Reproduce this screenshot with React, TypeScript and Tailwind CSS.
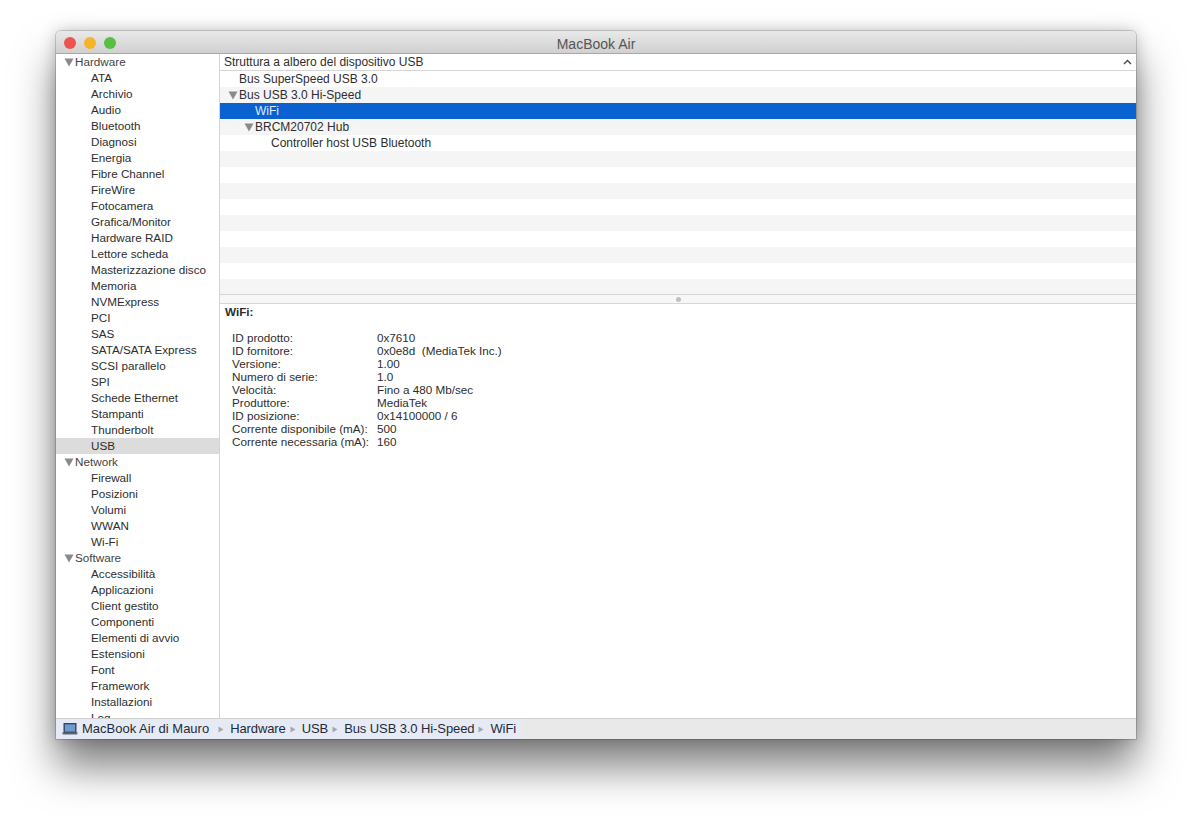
import React from "react";

const sections = [
  {
    title: "Hardware",
    items: ["ATA", "Archivio", "Audio", "Bluetooth", "Diagnosi", "Energia", "Fibre Channel", "FireWire", "Fotocamera", "Grafica/Monitor", "Hardware RAID", "Lettore scheda", "Masterizzazione disco", "Memoria", "NVMExpress", "PCI", "SAS", "SATA/SATA Express", "SCSI parallelo", "SPI", "Schede Ethernet", "Stampanti", "Thunderbolt", "USB"],
  },
  { title: "Network", items: ["Firewall", "Posizioni", "Volumi", "WWAN", "Wi-Fi"] },
  {
    title: "Software",
    items: ["Accessibilità", "Applicazioni", "Client gestito", "Componenti", "Elementi di avvio", "Estensioni", "Font", "Framework", "Installazioni", "Log"],
  },
];

const details = [
  ["ID prodotto:", "0x7610"],
  ["ID fornitore:", "0x0e8d  (MediaTek Inc.)"],
  ["Versione:", "1.00"],
  ["Numero di serie:", "1.0"],
  ["Velocità:", "Fino a 480 Mb/sec"],
  ["Produttore:", "MediaTek"],
  ["ID posizione:", "0x14100000 / 6"],
  ["Corrente disponibile (mA):", "500"],
  ["Corrente necessaria (mA):", "160"],
];

const crumbs = ["Hardware", "USB", "Bus USB 3.0 Hi-Speed", "WiFi"];

function Disclosure() {
  return (
    <svg width="10" height="9" viewBox="0 0 10 9" className="shrink-0">
      <path d="M0.5 0.5h9L5 8.5z" fill="#8a8a8a" />
    </svg>
  );
}

function Crumb() {
  return (
    <svg width="6" height="7" viewBox="0 0 6 7" className="shrink-0">
      <path d="M0.5 0.5L5.5 3.5L0.5 6.5z" fill="#a4a8b0" />
    </svg>
  );
}

function Laptop() {
  return (
    <svg width="16" height="12" viewBox="0 0 16 12" className="shrink-0">
      <rect x="2" y="0.5" width="12" height="9" fill="#3f5f86" stroke="#39424e" />
      <rect x="3" y="1.5" width="10" height="7" fill="#6d9bd0" />
      <path d="M0 9.5h16l-1 2H1z" fill="#5c6672" />
    </svg>
  );
}

function TreeRow({ label, indent, open, selected, striped }: { label?: string; indent: string; open?: boolean; selected?: boolean; striped?: boolean }) {
  return (
    <div className={`flex h-4 items-center ${indent} ${selected ? "bg-[#0a62d0] text-[#dfe9f8]" : striped ? "bg-[#f5f5f5]" : "bg-white"}`}>
      <div className="flex w-[11px] shrink-0 justify-start">{open && <Disclosure />}</div>
      {label && <span>{label}</span>}
    </div>
  );
}

export default function App() {
  return (
    <div className="h-[819px] w-[1192px] overflow-hidden bg-white pl-[56px] pt-[31px] font-['Liberation_Sans',Arial,sans-serif] text-[11.7px] leading-4 text-[#2e2e2e]">
      <div className="flex h-[708px] w-[1080px] flex-col overflow-hidden rounded-t-[5px] shadow-[0_0_0_1px_rgba(0,0,0,0.16),0_28px_42px_rgba(0,0,0,0.5),0_0_16px_rgba(0,0,0,0.22)]">
        {/* TITLE BAR */}
        <div className="relative flex h-[23px] shrink-0 items-center justify-center border-b border-[#a9a9a9] bg-gradient-to-b from-[#e9e9e9] to-[#d0d0d0] pt-[3px] text-[14px] text-[#555]">
          <div className="absolute left-[8px] top-[6px] flex gap-2">
            <span className="h-3 w-3 rounded-full bg-[#ee544f]" />
            <span className="h-3 w-3 rounded-full bg-[#f5b42a]" />
            <span className="h-3 w-3 rounded-full bg-[#58bf40]" />
          </div>
          MacBook Air
        </div>

        <div className="flex min-h-0 flex-1">
          {/* SIDEBAR */}
          <div className="w-[164px] shrink-0 overflow-hidden border-r border-[#d4d4d4] bg-white">
            {sections.map((section) => (
              <div key={section.title}>
                <div className="flex h-4 items-center gap-px pl-[8px] text-[#444]">
                  <Disclosure />
                  <span>{section.title}</span>
                </div>
                {section.items.map((item) => (
                  <div key={item} className={`h-4 pl-[35px] ${item === "USB" ? "bg-[#dcdcdc]" : ""}`}>
                    {item}
                  </div>
                ))}
              </div>
            ))}
          </div>

          {/* MAIN */}
          <div className="flex min-w-0 flex-1 flex-col bg-white">
            <div className="flex h-[17px] shrink-0 items-center justify-between border-b border-[#d6d6d6] px-[4px] text-[12px]">
              <span>Struttura a albero del dispositivo USB</span>
              <svg width="9" height="6" viewBox="0 0 9 6">
                <path d="M1 5L4.5 1.5L8 5" fill="none" stroke="#444" strokeWidth="1.3" />
              </svg>
            </div>

            <div className="h-[223px] shrink-0 overflow-hidden text-[12px]">
              <TreeRow label="Bus SuperSpeed USB 3.0" indent="pl-[8px]" />
              <TreeRow label="Bus USB 3.0 Hi-Speed" indent="pl-[8px]" open striped />
              <TreeRow label="WiFi" indent="pl-[24px]" selected />
              <TreeRow label="BRCM20702 Hub" indent="pl-[24px]" open striped />
              <TreeRow label="Controller host USB Bluetooth" indent="pl-[40px]" />
              {Array.from({ length: 9 }).map((_, i) => (
                <TreeRow key={i} indent="pl-[8px]" striped={i % 2 === 0} />
              ))}
            </div>

            {/* SPLITTER */}
            <div className="flex h-[10px] shrink-0 items-center justify-center border-y border-[#d6d6d6] bg-[#f7f7f7]">
              <span className="h-[5px] w-[5px] rounded-full bg-[#c0c0c0]" />
            </div>

            {/* DETAIL */}
            <div className="min-h-0 flex-1 pl-[5px] pt-px">
              <div className="h-[13px] font-bold leading-[13px]">WiFi:</div>
              <div className="pl-[7px] pt-[13px] leading-[13px]">
                {details.map(([label, value]) => (
                  <div key={label} className="flex h-[13px]">
                    <span className="w-[145px] shrink-0">{label}</span>
                    <span className="whitespace-pre">{value}</span>
                  </div>
                ))}
              </div>
            </div>
          </div>
        </div>

        {/* STATUS BAR */}
        <div className="flex h-[21px] shrink-0 border-t border-[#cfcfcf] bg-[#e9e9e9] text-[13px] text-[#1f2a3a]">
          <div className="flex items-center bg-[#e6eaf4] pl-[6px] pr-[6px]">
            <Laptop />
            <span className="ml-[4px] mr-[2px]">MacBook Air di Mauro</span>
            {crumbs.map((crumb, i) => (
              <React.Fragment key={crumb}>
                <span className={`flex mr-[6px] ${i === 0 ? "ml-[7px]" : "ml-[4px]"}`}><Crumb /></span>
                <span className="tracking-[-0.1px]">{crumb}</span>
              </React.Fragment>
            ))}
          </div>
        </div>
      </div>
    </div>
  );
}
